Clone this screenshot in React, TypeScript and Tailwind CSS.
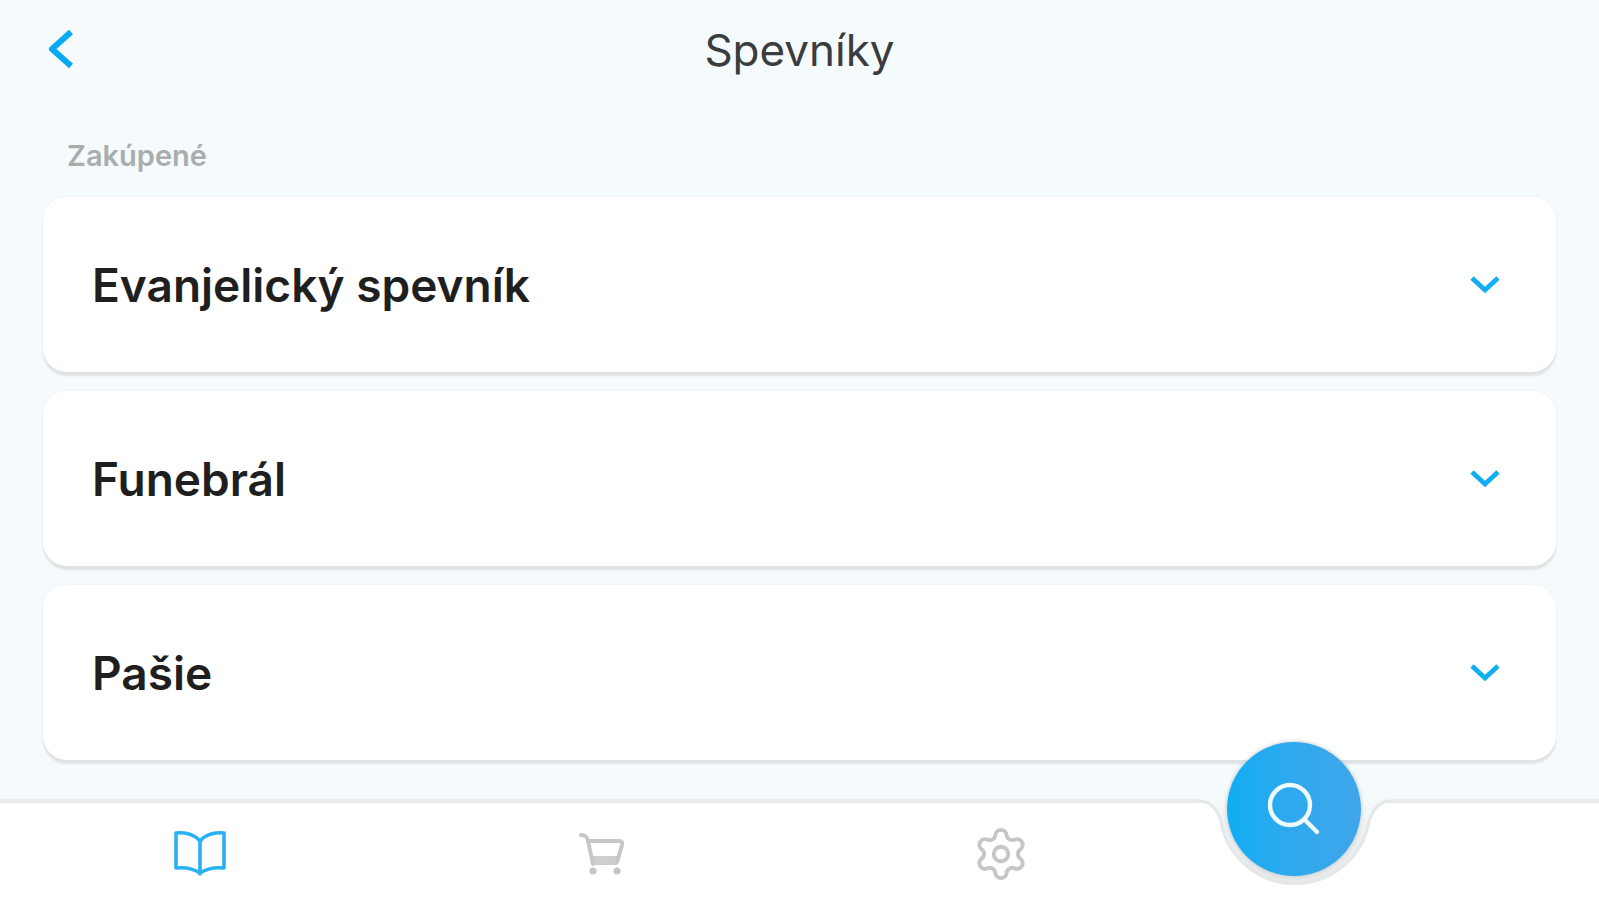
import { useState } from "react";
import { Settings } from "lucide-react";

const songbooks = ["Evanjelický spevník", "Funebrál", "Pašie"];

function BookIcon() {
  return (
    <svg viewBox="0 0 56 50" className="h-[50px] w-14" fill="none" stroke="currentColor" strokeWidth="3.6" strokeLinejoin="round" strokeLinecap="round" aria-hidden="true">
      <path d="M28 12C22 5 14 3 4 4V39C14 38 22 40 28 44C34 40 42 38 52 39V4C42 3 34 5 28 12Z" />
      <path d="M28 12V45" />
    </svg>
  );
}

function CartIcon() {
  return (
    <svg viewBox="0 0 48 46" className="h-[46px] w-12" fill="none" stroke="currentColor" strokeLinejoin="round" strokeLinecap="round" aria-hidden="true">
      <path d="M3 4C8 4 9 6 10 10L15 33" strokeWidth="3.8" />
      <path d="M10 10H41Q45 10 44 14L39 31" strokeWidth="4" />
      <path d="M13 25H41L39 34H15Z" fill="currentColor" fillOpacity="0.85" stroke="none" />
      <circle cx="15" cy="40" r="3.6" fill="currentColor" stroke="none" />
      <circle cx="39" cy="40" r="3.6" fill="currentColor" stroke="none" />
    </svg>
  );
}

function Songbook({ title }: { title: string }) {
  const [open, setOpen] = useState(false);
  return (
    <li>
      <button
        type="button"
        aria-expanded={open}
        onClick={() => setOpen(!open)}
        className="flex h-[175px] w-full items-center justify-between rounded-3xl bg-white pr-[55px] pl-[49px] text-left shadow-[0_4px_2px_#dfe3e3,0_0_3px_#eef2f2]"
      >
        <span className="text-[46px] leading-[56px] font-semibold text-[#1f1f1f]">{title}</span>
        <svg viewBox="0 0 32 20" className={open ? "h-5 w-8 rotate-180" : "h-5 w-8"} fill="none" stroke="#12aef2" strokeWidth="4.8" aria-hidden="true">
          <path d="M3 3L16 15L29 3" />
        </svg>
      </button>
    </li>
  );
}

export default function App() {
  return (
    <div className="flex min-h-screen flex-col bg-[#f5fafd] font-['Inter','Liberation_Sans',sans-serif]">
      <header className="grid h-[100px] grid-cols-[1fr_auto_1fr] items-center px-[43px]">
        <button type="button" aria-label="Späť" className="w-8">
          <svg viewBox="0 0 32 42" className="h-[42px] w-8" fill="none" stroke="#0aa9f3" strokeWidth="6" strokeLinejoin="round" aria-hidden="true">
            <path d="M28 3L9 20L28 37" />
          </svg>
        </button>
        <h1 className="text-[44px] leading-[56px] font-normal text-[#3a3c3d]">Spevníky</h1>
      </header>

      <main className="flex-1 px-[43px] pb-9">
        <h2 className="mt-9 mb-[21px] pl-6 text-[29px] leading-10 font-semibold text-[#a9adae]">Zakúpené</h2>
        <ul className="flex flex-col gap-[19px]">
          {songbooks.map((title) => (
            <Songbook key={title} title={title} />
          ))}
        </ul>
      </main>

      <nav className="sticky bottom-0 grid h-[101px] grid-cols-4 border-t-4 border-[#e8ecee] bg-white text-[#c6c6c6]">
        <button type="button" aria-label="Spevníky" aria-current="page" className="flex items-center justify-center pt-1 text-[#28b2f3]">
          <BookIcon />
        </button>
        <button type="button" aria-label="Obchod" className="flex items-center justify-center pt-1 pl-1">
          <CartIcon />
        </button>
        <button type="button" aria-label="Nastavenia" className="flex items-center justify-center pt-1 pl-1">
          <Settings className="size-[58px]" strokeWidth={1.6} />
        </button>
        <div className="relative w-48">
          <svg viewBox="0 0 192 100" className="absolute -top-1.5 left-0 h-[100px] w-48" fill="none" aria-hidden="true">
            <defs>
              <linearGradient id="notch" x1="0" y1="0" x2="0" y2="1">
                <stop offset="0" stopColor="#f5fafd" />
                <stop offset="0.5" stopColor="#eceff0" />
                <stop offset="1" stopColor="#e6e8e9" />
              </linearGradient>
            </defs>
            <path d="M0 0V4C12 4 18 12 22 24A75 75 0 0 0 170 24C174 12 180 4 192 4V0Z" fill="url(#notch)" />
            <path d="M0 4C12 4 18 12 22 24A75 75 0 0 0 170 24C174 12 180 4 192 4" stroke="#e4e8e9" strokeWidth="3" />
          </svg>
          <button
            type="button"
            aria-label="Hľadať"
            className="absolute -top-[61px] left-7 flex size-[134px] items-center justify-center rounded-full bg-linear-to-r from-[#0eadf2] to-[#40a5ea] shadow-[0_0_4px_#b9bec0]"
          >
            <svg viewBox="0 0 56 56" className="size-14" fill="none" stroke="#eefaff" strokeWidth="4.4" strokeLinecap="round" aria-hidden="true">
              <circle cx="24" cy="24" r="20" />
              <path d="M38.5 38.5L51 51" />
            </svg>
          </button>
        </div>
      </nav>
    </div>
  );
}
